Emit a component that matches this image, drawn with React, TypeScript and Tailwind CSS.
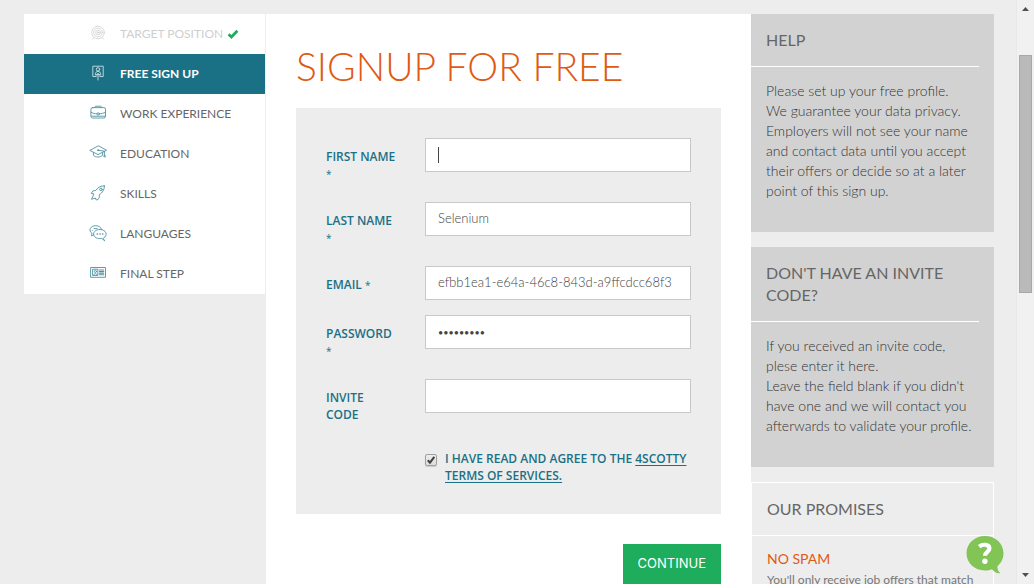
import type { ReactNode } from "react";

const iconClass = "h-4 w-[18px] shrink-0 overflow-visible";

function Icon({ children }: { children: ReactNode }) {
  return (
    <svg viewBox="0 0 18 16" className={iconClass} fill="none" stroke="currentColor" strokeWidth="0.9" strokeLinejoin="round" strokeLinecap="round" aria-hidden="true">
      {children}
    </svg>
  );
}

const TargetIcon = () => (
  <Icon>
    <circle cx="9" cy="7.5" r="6.3" />
    <circle cx="9" cy="7.5" r="4.3" />
    <circle cx="9" cy="7.5" r="2.3" />
    <circle cx="9" cy="7.5" r="0.7" fill="currentColor" />
    <path d="M5 12.5 3.6 14M13 12.5l1.4 1.5" />
  </Icon>
);

const SignUpIcon = () => (
  <Icon>
    <path d="M7.2 11.5H3.8V1.2h10.4v10.3h-3.4" />
    <circle cx="9" cy="4.3" r="1.7" />
    <path d="M6.2 9.3c0-4 5.6-4 5.6 0z" />
    <path d="M9 15V8.6M7.2 10.4 9 8.6l1.8 1.8" />
  </Icon>
);

const BriefcaseIcon = () => (
  <Icon>
    <rect x="1.9" y="2.6" width="14.6" height="10.4" rx="1.6" />
    <path d="M5.8 2.4c0-.9.4-1.2 1.1-1.2h4.6c.7 0 1.1.3 1.1 1.2M1.900 7.2c2.200 1.200 4 1.500 5.900 1.600M10.600 8.800c1.900-.1 3.700-.4 5.900-1.600M2.400 11.200h13.600" />
    <circle cx="9.200" cy="8.900" r="1.200" />
  </Icon>
);

const EducationIcon = () => (
  <Icon>
    <path d="M9 1 .8 5.400l8.200 4.200 8.200-4.200zM9 5.200l6.400 1v4" />
    <path d="M4.400 7.600v2.600c1.400 2.400 7.800 2.400 9.200 0V7.600M15.400 10.200l-.6 1.600h1.300z" />
    <circle cx="9" cy="5.200" r="0.500" fill="currentColor" />
  </Icon>
);

const SkillsIcon = () => (
  <Icon>
    <path d="M15.400.900c-3.600-.3-6.400 1.200-8.600 4.600l-2.600.3-2 2.600 2.600.5-.6 1.900-1.700 3.500 3.900-1.300.7 1.900L9 14.600l1.400-2.400-.2-2.400c3.600-2.200 5.300-5.300 5.200-8.900z" />
    <circle cx="11.900" cy="4.400" r="1.300" />
  </Icon>
);

const LanguagesIcon = () => (
  <Icon>
    <path d="M4.600 9.700 2.500 10.900l.5-2.500C-1.200 5.300 1.700.7 6.700.7c2.800 0 5.300 1.400 5.800 3.500M3.200 5.400h.1M5 3.600h3.200" />
    <path d="M14.500 13.200c5.300-3.200 2.200-8.700-3.400-8.700-4.200 0-6.500 2.300-6.500 4.500 0 3.300 4.100 5.400 8.200 4.400l2.600 2.200z" />
    <path d="M8.200 9h.3M10.900 9h.3M13.600 9h.3" strokeWidth="1.400" />
  </Icon>
);

const FinalIcon = () => (
  <Icon>
    <rect x="2" y="2.500" width="14.500" height="9.800" />
    <path d="M10.400 5h4.300M10.400 6.600h4.300M10.400 8.200h4.300M10.400 9.800h4.300" strokeWidth="1.100" />
    <rect x="4" y="4.200" width="4.800" height="6.200" />
    <circle cx="6.400" cy="6.400" r="1.100" />
    <path d="M4.600 10.200c.2-2.200 3.400-2.200 3.600 0" />
  </Icon>
);

type State = "done" | "active" | "todo";

const steps: { label: string; icon: ReactNode; state: State }[] = [
  { label: "TARGET POSITION", icon: <TargetIcon />, state: "done" },
  { label: "FREE SIGN UP", icon: <SignUpIcon />, state: "active" },
  { label: "WORK EXPERIENCE", icon: <BriefcaseIcon />, state: "todo" },
  { label: "EDUCATION", icon: <EducationIcon />, state: "todo" },
  { label: "SKILLS", icon: <SkillsIcon />, state: "todo" },
  { label: "LANGUAGES", icon: <LanguagesIcon />, state: "todo" },
  { label: "FINAL STEP", icon: <FinalIcon />, state: "todo" },
];

const rowStyle: Record<State, string> = {
  done: "bg-white text-[#cfcfcf]",
  active: "bg-[#1a7185] font-bold text-white",
  todo: "bg-white text-[#666]",
};

const iconStyle: Record<State, string> = {
  done: "text-[#d4d4d4]",
  active: "text-[#c9e0e5]",
  todo: "text-[#4f93a3]",
};

function Steps() {
  return (
    <nav aria-label="Profile steps" className="self-start pr-px">
      <ul>
        {steps.map((s) => (
          <li key={s.label}>
            <a href="#" className={"flex h-10 items-center pl-[65px] text-xs " + rowStyle[s.state]}>
              <span className={"mr-[13px] pb-0.5 " + iconStyle[s.state]}>{s.icon}</span>
              {s.label}
              {s.state === "done" && (
                <svg viewBox="0 0 12 10" className="ml-1 h-[10px] w-3" aria-label="Completed">
                  <path d="M1.600 5.200 4.400 8l6-6.200" fill="none" stroke="#1ead5c" strokeWidth="2.800" />
                </svg>
              )}
            </a>
          </li>
        ))}
      </ul>
    </nav>
  );
}

interface FieldProps {
  id: string;
  label: ReactNode;
  type?: string;
  value?: string;
  caret?: boolean;
}

function Field({ id, label, type = "text", value = "", caret = false }: FieldProps) {
  const textStyle = type === "password" ? "text-[9px]" : "pb-[3px] text-[13px] font-light";
  return (
    <div className="mb-[15px] grid grid-cols-[99px_1fr] items-start">
      <label htmlFor={id} className="pt-[10px] pb-[5px] font-['Open_Sans',sans-serif] text-xs leading-[17px] font-semibold text-[#1a7185]">
        {label}
      </label>
      <div className="relative flex">
        <input
          id={id}
          type={type}
          defaultValue={value}
          className={"h-[34px] w-full min-w-0 border border-[#c8c8c8] bg-white px-3 text-[#444] outline-none " + textStyle}
        />
        {caret && <span className="absolute top-[9px] left-[13px] h-4 w-px bg-[#444]" />}
      </div>
    </div>
  );
}

const star = <span className="text-[10px] leading-none font-normal">*</span>;

function SignupForm() {
  return (
    <main className="bg-white px-[30px] pt-[28px]">
      <h1 className="text-[39px] leading-[48px] font-light text-[#e05a14]">SIGNUP FOR FREE</h1>
      <form>
        <div className="mt-[18px] bg-[#ededed] p-[30px]">
          <Field id="first" label={<>FIRST NAME<br />{star}</>} caret />
          <Field id="last" label={<>LAST NAME<br />{star}</>} value="Selenium" />
          <Field id="email" label={<>EMAIL {star}</>} value="efbb1ea1-e64a-46c8-843d-a9ffcdcc68f3" />
          <Field id="password" label={<>PASSWORD<br />{star}</>} type="password" value="selenium1" />
          <Field id="invite" label={<>INVITE<br />CODE</>} />
          <div className="flex gap-2 pt-[7px] pl-[99px]">
            <span className="mt-1 grid size-3 shrink-0">
              <input
                id="terms"
                type="checkbox"
                defaultChecked
                className="peer col-start-1 row-start-1 size-3 appearance-none rounded-[2px] border border-[#a0a0a0] bg-linear-to-b from-[#ededed] to-[#dcdcdc] shadow-[0_1px_1px_rgba(0,0,0,0.15)]"
              />
              <svg viewBox="0 0 12 12" className="pointer-events-none invisible col-start-1 row-start-1 size-3 peer-checked:visible" aria-hidden="true">
                <path d="M2.800 6.200 5 8.600 9.300 2.900" fill="none" stroke="#404040" strokeWidth="2" />
              </svg>
            </span>
            <label htmlFor="terms" className="font-['Open_Sans',sans-serif] text-xs leading-[17px] font-semibold text-[#1a7185]">
              I HAVE READ AND AGREE TO THE{" "}
              <a href="#" className="underline underline-offset-2">4SCOTTY TERMS OF SERVICES.</a>
            </label>
          </div>
        </div>
        <div className="mt-[30px] flex justify-end pb-[30px]">
          <button type="submit" className="h-10 bg-[#1ead5c] px-[15px] font-['Inter',sans-serif] text-[13px] text-white">
            CONTINUE
          </button>
        </div>
      </form>
    </main>
  );
}

function HelpBox({ title, children }: { title: string; children: ReactNode }) {
  return (
    <section className="mb-[15px] bg-[#d2d2d2] pr-[15px] pb-[31px]">
      <h2 className="border-b border-white py-[15px] pl-[15px] text-base leading-[22px] text-[#666]">{title}</h2>
      <p className="pt-[14px] pl-[15px] text-sm leading-5 font-light text-[#333]">{children}</p>
    </section>
  );
}

function Sidebar() {
  return (
    <aside>
      <HelpBox title="HELP">
        Please set up your free profile.<br />
        We guarantee your data privacy.<br />
        Employers will not see your name<br />
        and contact data until you accept<br />
        their offers or decide so at a later<br />
        point of this sign up.
      </HelpBox>
      <HelpBox title="DON'T HAVE AN INVITE CODE?">
        If you received an invite code,<br />
        plese enter it here.<br />
        Leave the field blank if you didn't<br />
        have one and we will contact you<br />
        afterwards to validate your profile.
      </HelpBox>
      <section className="border border-white">
        <h2 className="border-b border-white px-[15px] py-[15px] text-base leading-[22px] text-[#666]">OUR PROMISES</h2>
        <div className="px-[15px] pt-[13px] pb-[15px]">
          <h3 className="text-sm leading-5 text-[#e05a14]">NO SPAM</h3>
          <p className="pt-px text-xs leading-5 text-[#777]">You'll only receive job offers that match</p>
        </div>
      </section>
    </aside>
  );
}

function HelpBubble() {
  return (
    <button type="button" aria-label="Get help" className="absolute right-[12px] bottom-[10px] h-[38px] w-[38px]">
      <svg viewBox="0 0 38 38" className="h-[38px] w-[38px]">
        <path d="M19 0C8.500 0 .5 7.500.5 17.300S8.500 34.500 19 34.500c2.600 0 5-.4 7.100-1.200 1.900 2.400 4.500 4.600 8.200 3.900-2.100-1.600-2.900-3.900-2.900-6.900 3.800-3.200 6.100-7.700 6.100-13C37.500 7.500 29.500 0 19 0z" fill="#82c455" />
        <path d="M13.200 10.600c3.800-3 10.200-2.300 10.200 1.900 0 3.400-4.400 3.300-4.400 7.300" fill="none" stroke="#fff" strokeWidth="4.200" />
        <circle cx="18.900" cy="25.300" r="2.700" fill="#fff" />
      </svg>
    </button>
  );
}

function ScrollBar() {
  return (
    <div className="flex w-[18px] shrink-0 flex-col items-center border-l border-[#e8e8e8] bg-[#f1f1f1] py-[7px]" aria-hidden="true">
      <svg viewBox="0 0 7 4" className="h-1 w-[7px]"><path d="M3.500 0 7 4H0z" fill="#505050" /></svg>
      <div className="flex w-full flex-1 flex-col items-center pt-[44px]">
        <div className="h-[46%] w-[13px] border border-[#a8a8a8] bg-[#bababa]" />
      </div>
      <svg viewBox="0 0 7 4" className="h-1 w-[7px]"><path d="M0 0h7L3.500 4z" fill="#505050" /></svg>
    </div>
  );
}

export default function App() {
  return (
    <div className="flex h-screen overflow-hidden bg-[#ededed] font-['Lato',sans-serif]">
      <div className="relative min-w-0 flex-1 overflow-hidden">
        <div className="mx-auto grid w-full max-w-[1016px] grid-cols-[242fr_485fr_243fr] pt-[14px] pr-[22px] pl-6">
          <Steps />
          <SignupForm />
          <Sidebar />
        </div>
        <HelpBubble />
      </div>
      <ScrollBar />
    </div>
  );
}
